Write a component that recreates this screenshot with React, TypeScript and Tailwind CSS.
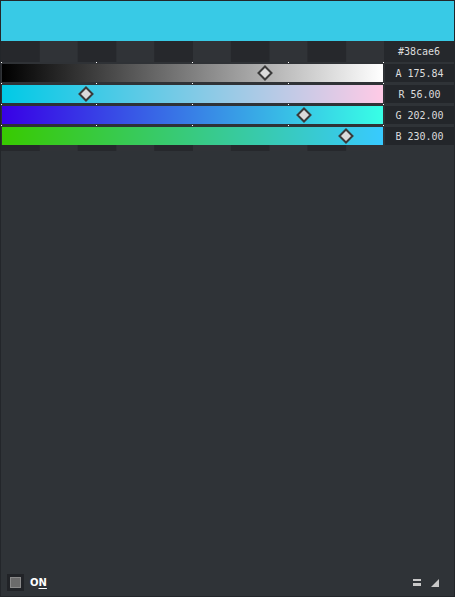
import React from "react";

const mono = { fontFamily: '"DejaVu Sans Mono", "Liberation Mono", monospace' };

const channels = [
  { label: "A", value: 175.84, from: "#000000", to: "#ffffff" },
  { label: "R", value: 56, from: "#00cae6", to: "#ffcae6" },
  { label: "G", value: 202, from: "#3800e6", to: "#38ffe6" },
  { label: "B", value: 230, from: "#38ca00", to: "#38caff" },
];

const ticks = [0, 95, 191, 287, 382];

function Checker({ h }: { h: string }) {
  return (
    <div
      className={`${h} w-full bg-[linear-gradient(90deg,#26282c_50%,#303337_50%)] bg-[length:76.6px_100%]`}
    />
  );
}

function Handle({ pct }: { pct: number }) {
  return (
    <svg
      width="16"
      height="16"
      viewBox="0 0 16 16"
      className="absolute top-[1px]"
      style={{ left: `calc(${pct * 100}% - 8px)` }}
    >
      <polygon points="8,1.5 14.5,8 8,14.5 1.5,8" fill="#dadada" stroke="#3a3a3a" strokeWidth="2" />
    </svg>
  );
}

export default function App() {
  return (
    <div className="w-[455px] h-[597px] bg-[#2f3337] border border-[#23262a] flex flex-col">
      <div className="h-[40px] bg-[#38cae6]" />
      <div className="flex">
        <div className="w-[383px] flex flex-col">
          <Checker h="h-[21px]" />
          <div className="relative flex flex-col gap-[3px] pt-[2px] px-[1px] bg-[#2f3236]">
            {ticks.map((x) =>
              [0, 21, 42, 63].map((y) => (
                <div
                  key={`${x}-${y}`}
                  className="absolute w-[1px] h-[1px] bg-white"
                  style={{ left: x, top: y }}
                />
              ))
            )}
            {channels.map((c) => (
              <div
                key={c.label}
                className="relative h-[18px]"
                style={{ background: `linear-gradient(90deg, ${c.from}, ${c.to})` }}
              >
                <Handle pct={c.value / 255} />
              </div>
            ))}
          </div>
          <Checker h="h-[6px]" />
        </div>
        <div className="w-[70px] flex flex-col text-[10px] text-[#dcdcdc]" style={mono}>
          <div className="h-[21px] bg-[#25282c] flex items-center justify-center">#38cae6</div>
          <div className="flex flex-col gap-[3px] pt-[2px]">
            {channels.map((c) => (
              <div
                key={c.label}
                className="h-[18px] ml-[1px] bg-[#23262a] flex items-center justify-center"
              >
                {c.label} {c.value.toFixed(2)}
              </div>
            ))}
          </div>
        </div>
      </div>
      <div className="mt-auto h-[21px] mb-[3px] flex items-center px-[6px]">
        <div className="w-[17px] h-[17px] bg-[#212327] flex items-center justify-center">
          <div className="w-[11px] h-[11px] bg-[#6b6b6b] border border-[#8a8a8a]" />
        </div>
        <span
          className="ml-[6px] text-[10px] font-bold text-white leading-none"
          style={{ fontFamily: '"DejaVu Sans", sans-serif' }}
        >
          O<span className="underline underline-offset-2">N</span>
        </span>
        <div className="ml-auto flex items-center gap-[10px] mr-[9px]">
          <div className="flex flex-col gap-[2px]">
            <div className="w-[8px] h-[2px] bg-[#c8c8c8]" />
            <div className="w-[8px] h-[3px] bg-[#c8c8c8]" />
          </div>
          <svg width="8" height="8" viewBox="0 0 8 8">
            <polygon points="8,0 8,8 0,8" fill="#c8c8c8" />
          </svg>
        </div>
      </div>
    </div>
  );
}
